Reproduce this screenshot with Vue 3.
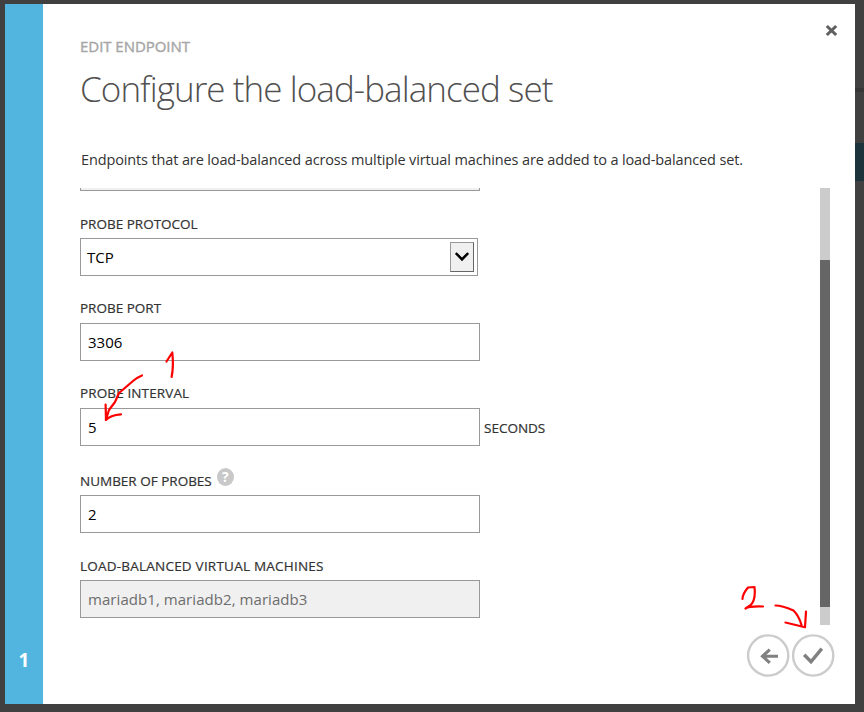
<script setup>
import { ref } from 'vue'

const protocol = ref('TCP')
const probePort = ref('3306')
const probeInterval = ref('5')
const probeCount = ref('2')
const machines = ref('mariadb1, mariadb2, mariadb3')
</script>

<template>
  <div class="page">
    <div class="backdrop-line"></div>
    <div class="backdrop-band"></div>
    <section class="modal">
      <aside class="rail"><span class="step">1</span></aside>
      <div class="content">
        <button class="close" aria-label="Close">
          <svg width="13" height="13" viewBox="0 0 13 13"><path d="M1.8 2 11.2 11M11.2 2 1.8 11" fill="none" stroke="#606060" stroke-width="3.1" /></svg>
        </button>
        <div class="eyebrow">EDIT ENDPOINT</div>
        <h1>Configure the load-balanced set</h1>
        <p class="desc">Endpoints that are load-balanced across multiple virtual machines are added to a load-balanced set.</p>
        <div class="scroller">
          <form class="form">
            <div class="clipped"></div>
            <label class="label protocol">PROBE PROTOCOL</label>
            <div class="box select">
              <span>{{ protocol }}</span>
              <span class="drop"><svg width="14" height="10" viewBox="0 0 14 10"><path d="M0.8 1 7 7.4 13.2 1" fill="none" stroke="#000" stroke-width="2.5" /></svg></span>
            </div>
            <label class="label port">PROBE PORT</label>
            <div class="box">{{ probePort }}</div>
            <label class="label port interval">PROBE INTERVAL</label>
            <div class="row">
              <div class="box">{{ probeInterval }}</div>
              <span class="unit">SECONDS</span>
            </div>
            <label class="label count">NUMBER OF PROBES<span class="help">?</span></label>
            <div class="box">{{ probeCount }}</div>
            <label class="label machines">LOAD-BALANCED VIRTUAL MACHINES</label>
            <div class="box disabled">{{ machines }}</div>
          </form>
          <div class="track"><div class="thumb"></div></div>
        </div>
        <div class="actions">
          <svg width="43" height="43" viewBox="0 0 43 43"><circle cx="21.2" cy="21.5" r="20.1" fill="#fff" stroke="#ccc" stroke-width="2.4" /><path d="M31 22.2H15M22.8 15.6 15.5 22.2l7.3 6.6" fill="none" stroke="#808080" stroke-width="3.1" /></svg>
          <svg width="43" height="43" viewBox="0 0 43 43"><circle cx="21.2" cy="21.5" r="20.1" fill="#fff" stroke="#ccc" stroke-width="2.4" /><path d="M12.2 20.8 19 27.8 29.8 14.6" fill="none" stroke="#808080" stroke-width="3.4" /></svg>
        </div>
      </div>
    </section>
    <svg class="ink" width="864" height="712" viewBox="0 0 864 712">
      <path d="M166.5 361.5 172.3 352.5Q173.8 366 171.6 377M142 375.5Q137 377.5 133 381L119 393 115 402 109 410 105.8 420M105.6 404.5 106 420Q110 415 121 414.3" />
      <path d="M742.5 599Q742.5 594 748 587.5L754.5 587Q756 601 750 605.5L745.5 608.5Q749 606 763 606.5M775.5 605.5Q782 605.5 793.5 610.5 799 616 801.5 625M785.5 622.5 805 627.2 806 611.5" />
    </svg>
  </div>
</template>

<style>
body { margin: 0; }
</style>
<style scoped>
.page { position: relative; box-sizing: border-box; width: 864px; height: 712px; padding: 4px 9px 8px 5px; background: #404040; overflow: hidden; font-family: "Open Sans", "Noto Sans", sans-serif; color: #333; }
.backdrop-line, .backdrop-band { position: absolute; right: 0; width: 9px; }
.backdrop-line { top: 88px; height: 4px; background: #363636; }
.backdrop-band { top: 143px; height: 38px; background: #1c333c; }
.modal { display: flex; width: 850px; height: 700px; background: #fff; }
.rail { display: flex; align-items: flex-end; justify-content: center; box-sizing: border-box; width: 38px; padding-bottom: 34px; background: #52b5e0; }
.step { color: #fff; font-size: 19px; line-height: 20px; font-weight: 700; }
.content { position: relative; flex: 1; padding-left: 37px; }
.close { position: absolute; top: 20px; right: 17px; width: 13px; height: 13px; padding: 0; border: 0; background: none; }
.close svg { display: block; }
.eyebrow { margin-top: 31px; font-size: 15px; line-height: 22px; color: #a6a6a6; letter-spacing: -0.04px; -webkit-text-stroke: 0.4px #a6a6a6; }
h1 { margin: 8px 0 0; font-size: 35px; line-height: 48px; font-weight: 300; color: #505050; letter-spacing: -0.93px; white-space: nowrap; }
.desc { margin: 35px 0 0 1px; font-size: 14.5px; line-height: 24px; letter-spacing: -0.13px; white-space: nowrap; }
.scroller { display: flex; justify-content: space-between; width: 750px; height: 437px; margin-top: 16px; }
.form { flex: 1; margin: 0; }
.clipped { box-sizing: border-box; width: 400px; height: 3px; border: 1px solid #999; border-top: 0; background: #f0f0f0; }
.label { display: flex; height: 20px; font-size: 13.5px; line-height: 20px; -webkit-text-stroke: 0.2px #333; }
.protocol { margin: 23px 0 4px; }
.port { margin: 22px 0 5px; }
.interval { letter-spacing: 0.12px; }
.count { margin: 25px 0 4px; }
.machines { margin: 23px 0 4px; letter-spacing: 0.22px; }
.box { display: flex; align-items: center; box-sizing: border-box; width: 400px; height: 38px; padding-left: 7px; border: 1px solid #999; font-size: 15px; line-height: 22px; color: #000; background: #fff; }
.select { justify-content: space-between; width: 398px; padding: 0 3px 0 6px; }
.drop { display: flex; align-items: center; justify-content: center; box-sizing: border-box; width: 24px; height: 30px; border: 1px solid #999; border-right-color: #666; border-bottom-color: #666; background: #f0f0f0; }
.row { display: flex; align-items: center; gap: 4px; }
.unit { padding-top: 1px; font-size: 13.5px; -webkit-text-stroke: 0.2px #333; }
.disabled { background: #f0f0f0; color: #6d6d6d; letter-spacing: 0.06px; }
.help { width: 17px; height: 18px; margin: -3px 0 0 5px; border-radius: 50%; background: #c8c8c8; color: #fff; font-size: 14px; line-height: 18px; font-weight: 700; text-align: center; -webkit-text-stroke: 0; }
.track { width: 10px; height: 437px; box-sizing: border-box; padding-top: 72px; background: #ccc; }
.thumb { height: 347px; background: #666; }
.actions { display: flex; gap: 2px; margin: 9px 0 0 667px; }
.ink { position: absolute; inset: 0; fill: none; stroke: #f00; stroke-width: 2.2; stroke-linecap: round; stroke-linejoin: round; pointer-events: none; }
</style>
